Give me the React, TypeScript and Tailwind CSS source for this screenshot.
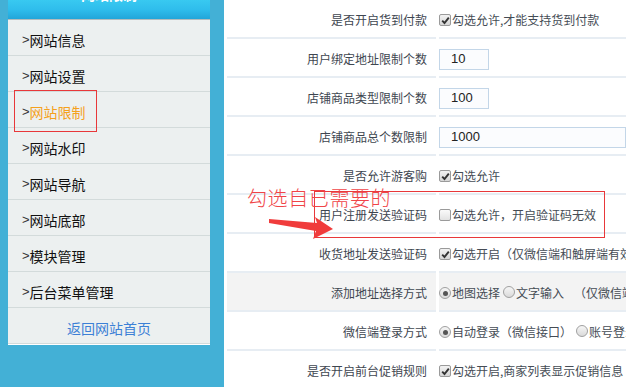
import type { ReactNode } from 'react'

const menu = ['网站信息', '网站设置', '网站限制', '网站水印', '网站导航', '网站底部', '模块管理', '后台菜单管理']

function Check({ on = true }: { on?: boolean }) {
  return (
    <span
      className={`inline-flex w-[12px] h-[12px] shrink-0 items-center justify-center rounded-[2px] border border-[#9a9a9a] ${
        on ? 'bg-gradient-to-b from-[#f2f2f2] to-[#d6d6d6]' : 'bg-gradient-to-b from-[#fafafa] to-[#e2e2e2]'
      }`}
    >
      {on && (
        <svg width="9" height="9" viewBox="0 0 9 9">
          <path d="M1.2 4.6 L3.5 7 L7.8 1.6" fill="none" stroke="#333" strokeWidth="1.9" />
        </svg>
      )}
    </span>
  )
}

function Radio({ on = false }: { on?: boolean }) {
  return (
    <span className="inline-flex w-[12px] h-[12px] shrink-0 items-center justify-center rounded-full border border-[#a0a0a0] bg-gradient-to-b from-[#f6f6f6] to-[#dadada]">
      {on && <span className="w-[5px] h-[5px] rounded-full bg-[#555]" />}
    </span>
  )
}

function Input({ value, wide }: { value: string; wide?: boolean }) {
  return (
    <span
      className={`inline-flex items-center h-[21px] border border-[#c3d6e8] bg-[#fbfcfe] pl-[11px] text-[13px] text-[#222] font-['Liberation_Sans',sans-serif] ${
        wide ? 'w-[260px]' : 'w-[50px]'
      }`}
    >
      {value}
    </span>
  )
}

const rows: { label: string; gray?: boolean; value: ReactNode }[] = [
  { label: '是否开启货到付款', value: <><Check /><span className="ml-px">勾选允许,才能支持货到付款</span></> },
  { label: '用户绑定地址限制个数', value: <Input value="10" /> },
  { label: '店铺商品类型限制个数', value: <Input value="100" /> },
  { label: '店铺商品总个数限制', value: <Input value="1000" wide /> },
  { label: '是否允许游客购', value: <><Check /><span className="ml-px">勾选允许</span></> },
  { label: '用户注册发送验证码', value: <><Check on={false} /><span className="ml-px">勾选允许，开启验证码无效</span></> },
  { label: '收货地址发送验证码', value: <><Check /><span className="ml-px">勾选开启（仅微信端和触屏端有效）</span></> },
  {
    label: '添加地址选择方式',
    gray: true,
    value: (
      <>
        <Radio on />
        <span className="ml-px">地图选择</span>
        <span className="ml-[3px]"><Radio /></span>
        <span className="ml-px">文字输入</span>
        <span className="ml-[10px]">（仅微信端有效）</span>
      </>
    ),
  },
  {
    label: '微信端登录方式',
    value: (
      <>
        <Radio on />
        <span className="ml-px">自动登录（微信接口）</span>
        <span className="ml-[4px]"><Radio /></span>
        <span className="ml-px">账号登录</span>
      </>
    ),
  },
  { label: '是否开启前台促销规则', value: <><Check /><span className="ml-px">勾选开启,商家列表显示促销信息</span></> },
]

export default function App() {
  return (
    <div className="relative flex w-[626px] h-[387px] overflow-hidden bg-white font-['Noto_Sans_CJK_SC',sans-serif]">
      {/* left sidebar */}
      <div className="w-[224px] shrink-0 bg-[#43b0d6] pl-[8px]">
        <div className="w-[202px] bg-[#ecf0f0] border-b border-white">
          <div className="h-[20px] overflow-hidden border-b border-[#b4bcbd] bg-gradient-to-b from-[#38c9f1] via-[#2fbdec] to-[#22a5d9] text-center">
            <div className="-mt-[16px] leading-[20px] text-[14px] font-bold text-white">网站限制</div>
          </div>
          {menu.map((m) => (
            <div
              key={m}
              className="flex h-[36px] items-center border-b border-[#d3dbdb] pt-[5px] pl-[14px] text-[14px] text-[#111]"
            >
              <span className="text-[#333] font-['Liberation_Sans',sans-serif] text-[13px]">&gt;</span>
              <span className={m === '网站限制' ? 'text-[#f5a11c]' : ''}>{m}</span>
            </div>
          ))}
          <div className="flex h-[36px] items-center justify-center border-b border-[#d3dbdb] pt-[5px] text-[14px] text-[#3c80d6]">
            返回网站首页
          </div>
        </div>
      </div>

      {/* right form */}
      <div className="flex-1 pl-[3px]">
        <div className="grid grid-cols-[209px_1fr] gap-x-[3px] text-[12px] text-[#3e4650] whitespace-nowrap">
          {rows.map((r) => (
            <div key={r.label} className="contents">
              <div
                className={`flex h-[39px] items-center justify-end border-b-2 border-[#e7edf3] pt-[3px] pr-[9px] ${
                  r.gray ? 'bg-[#f3f3f3]' : ''
                }`}
              >
                {r.label}
              </div>
              <div
                className={`flex h-[39px] items-center overflow-hidden border-b-2 border-[#e7edf3] pt-[3px] text-[#454c55] ${
                  r.gray ? 'bg-[#f3f3f3]' : ''
                }`}
              >
                {r.value}
              </div>
            </div>
          ))}
        </div>
      </div>

      {/* annotations */}
      <div className="absolute left-[14px] top-[90px] w-[83px] h-[42px] border border-[#e8383a]" />
      <div className="absolute left-[314px] top-[191px] w-[291px] h-[47px] border-[1.5px] border-[#e8383a]" />
      <div className="absolute left-[247px] top-[185px] text-[20px] leading-[26px] tracking-[0.6px] text-[#f04448] font-light">
        勾选自已需要的
      </div>
      <svg className="absolute left-0 top-0" width="626" height="387" viewBox="0 0 626 387">
        <polygon points="269,219 317,223 315,217 333,229 313,239 316,231 269,223" fill="#f03c3c" />
      </svg>
    </div>
  )
}
